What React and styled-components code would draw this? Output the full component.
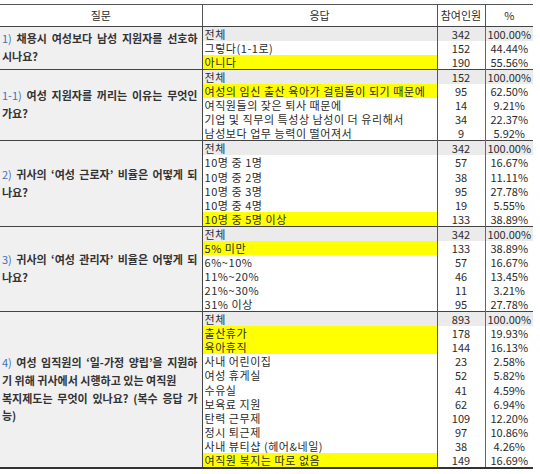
import React from 'react';
import styled, { createGlobalStyle } from 'styled-components';

const GlobalStyle = createGlobalStyle`
    html, body {
        margin: 0;
        padding: 0;
        background: #ffffff;
    }
    body {
        font-family: "Noto Sans CJK KR", "Noto Sans", sans-serif;
        color: #2b2b2b;
    }
`;

const Page = styled.div`
    width: 540px;
    padding-top: 4px;
`;

const Table = styled.table`
    width: 533px;
    border-collapse: collapse;
    table-layout: fixed;
    font-size: 11px;
    border-top: 1px solid #555;
    border-bottom: 2px solid #333;
`;

const HeadCell = styled.th`
    height: 21px;
    padding: 0;
    font-weight: normal;
    text-align: center;
    background: #fff;
    line-height: 21px;
    border-bottom: 1px solid #444;
    border-left: ${({ $first }) => ($first ? 'none' : '1px solid #555')};
`;

const Row = styled.tr`
    height: 14.1px;
    border-top: ${({ $groupStart }) => ($groupStart ? '1px solid #444' : 'none')};
`;

const QuestionCell = styled.td`
    padding: 0 4px 0 2px;
    background: #f0f0f0;
    vertical-align: middle;
    font-weight: bold;
    font-size: 11px;
    line-height: 17.8px;
    color: #333;
    border-right: 1px solid #444;
`;

const Line = styled.div`
    text-align: left;
    text-align-last: ${({ $justify }) => ($justify ? 'justify' : 'left')};
    white-space: nowrap;
`;

const Num = styled.span`
    color: #3f72b8;
    font-weight: normal;
`;

const AnswerCell = styled.td`
    padding: 0 0 0 2px;
    line-height: 14px;
    letter-spacing: 0.55px;
    white-space: nowrap;
    background: ${({ $total, $hl }) => ($hl ? '#ffff00' : $total ? '#ebebeb' : '#fff')};
    border-right: 1px solid #555;
`;

const ValueCell = styled.td`
    padding: 0;
    text-align: center;
    line-height: 14px;
    white-space: nowrap;
    background: ${({ $total }) => ($total ? '#ebebeb' : '#fff')};
    border-right: ${({ $last }) => ($last ? 'none' : '1px solid #666')};
`;

const groups = [
    {
        num: '1)',
        lines: [
            { t: ' 채용시 여성보다 남성 지원자를 선호하', j: true },
            { t: '시나요?' },
        ],
        rows: [
            ['전체', 342, '100.00%'],
            ['그렇다(1-1로)', 152, '44.44%'],
            ['아니다', 190, '55.56%', true],
        ],
    },
    {
        num: '1-1)',
        lines: [
            { t: ' 여성 지원자를 꺼리는 이유는 무엇인', j: true },
            { t: '가요?' },
        ],
        rows: [
            ['전체', 152, '100.00%'],
            ['여성의 임신 출산 육아가 걸림돌이 되기 때문에', 95, '62.50%', true],
            ['여직원들의 잦은 퇴사 때문에', 14, '9.21%'],
            ['기업 및 직무의 특성상 남성이 더 유리해서', 34, '22.37%'],
            ['남성보다 업무 능력이 떨어져서', 9, '5.92%'],
        ],
    },
    {
        num: '2)',
        lines: [
            { t: ' 귀사의 ‘여성 근로자’ 비율은 어떻게 되', j: true },
            { t: '나요?' },
        ],
        rows: [
            ['전체', 342, '100.00%'],
            ['10명 중 1명', 57, '16.67%'],
            ['10명 중 2명', 38, '11.11%'],
            ['10명 중 3명', 95, '27.78%'],
            ['10명 중 4명', 19, '5.55%'],
            ['10명 중 5명 이상', 133, '38.89%', true],
        ],
    },
    {
        num: '3)',
        lines: [
            { t: ' 귀사의 ‘여성 관리자’ 비율은 어떻게 되', j: true },
            { t: '나요?' },
        ],
        rows: [
            ['전체', 342, '100.00%'],
            ['5% 미만', 133, '38.89%', true],
            ['6%~10%', 57, '16.67%'],
            ['11%~20%', 46, '13.45%'],
            ['21%~30%', 11, '3.21%'],
            ['31% 이상', 95, '27.78%'],
        ],
    },
    {
        num: '4)',
        lines: [
            { t: ' 여성 임직원의 ‘일-가정 양립’을 지원하', j: true },
            { t: '기 위해 귀사에서 시행하고 있는 여직원' },
            { t: '복지제도는 무엇이 있나요? (복수 응답 가', j: true },
            { t: '능)' },
        ],
        rows: [
            ['전체', 893, '100.00%'],
            ['출산휴가', 178, '19.93%', true],
            ['육아휴직', 144, '16.13%', true],
            ['사내 어린이집', 23, '2.58%'],
            ['여성 휴게실', 52, '5.82%'],
            ['수유실', 41, '4.59%'],
            ['보육료 지원', 62, '6.94%'],
            ['탄력 근무제', 109, '12.20%'],
            ['정시 퇴근제', 97, '10.86%'],
            ['사내 뷰티샵 (헤어&네일)', 38, '4.26%'],
            ['여직원 복지는 따로 없음', 149, '16.69%', true],
        ],
    },
];

const App = () => {
    return (
        <Page>
            <GlobalStyle />
            <Table>
                <colgroup>
                    <col style={{ width: 202 }} />
                    <col style={{ width: 235 }} />
                    <col style={{ width: 48 }} />
                    <col style={{ width: 48 }} />
                </colgroup>
                <thead>
                    <tr>
                        <HeadCell $first>질문</HeadCell>
                        <HeadCell>응답</HeadCell>
                        <HeadCell>참여인원</HeadCell>
                        <HeadCell>%</HeadCell>
                    </tr>
                </thead>
                <tbody>
                    {groups.map((g, gi) =>
                        g.rows.map(([label, count, pct, hl], ri) => {
                            const total = ri === 0;
                            return (
                                <Row key={`${gi}-${ri}`} $groupStart={total && gi > 0}>
                                    {total && (
                                        <QuestionCell rowSpan={g.rows.length}>
                                            {g.lines.map((l, li) => (
                                                <Line key={li} $justify={l.j}>
                                                    {li === 0 && <Num>{g.num}</Num>}
                                                    {l.t}
                                                </Line>
                                            ))}
                                        </QuestionCell>
                                    )}
                                    <AnswerCell $total={total} $hl={hl}>{label}</AnswerCell>
                                    <ValueCell $total={total}>{count}</ValueCell>
                                    <ValueCell $total={total} $last>{pct}</ValueCell>
                                </Row>
                            );
                        })
                    )}
                </tbody>
            </Table>
        </Page>
    );
};

export default App;
